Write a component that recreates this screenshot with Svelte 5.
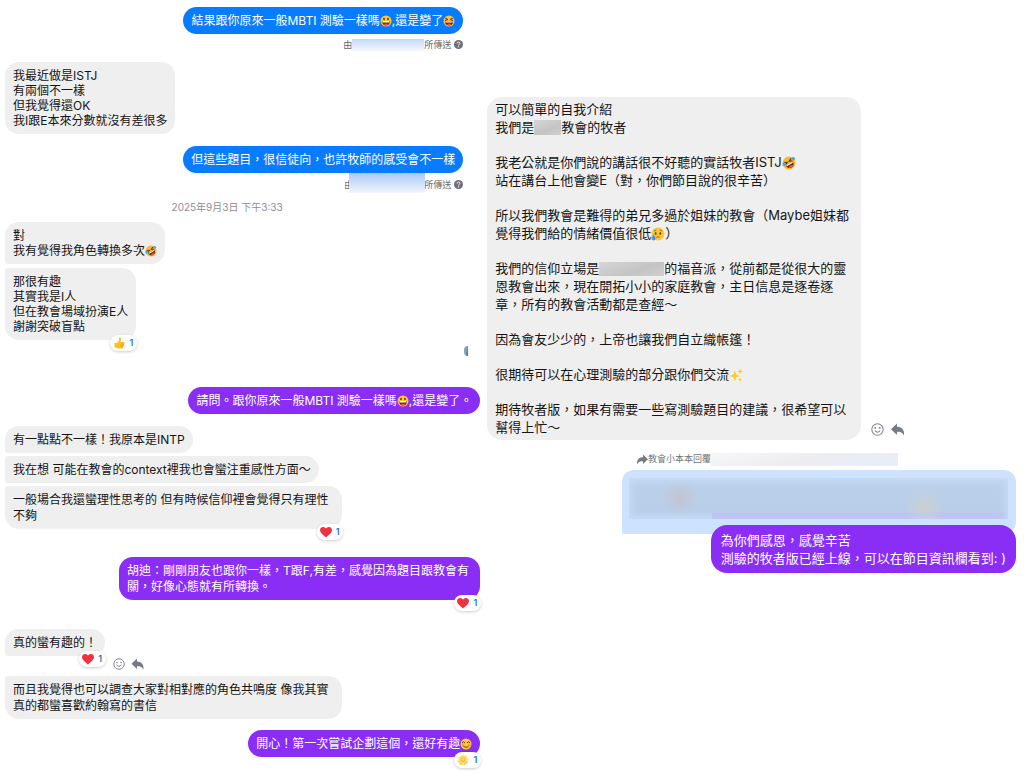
<script lang="ts">
	type Message = {
		text: string;
		gap: number;
		mine?: boolean;
		tone?: 'blue' | 'purple';
		loose?: boolean;
		joinTop?: boolean;
		joinBottom?: boolean;
		reaction?: 'thumb' | 'heart' | 'hug';
		actions?: boolean;
	};

	const firstQuestion: Message = {
		text: '結果跟你原來一般MBTI 測驗一樣嗎😀,還是變了😆',
		gap: 7,
		mine: true,
		tone: 'blue',
	};
	const firstAnswer: Message = {
		text: '我最近做是ISTJ\n有兩個不一樣\n但我覺得還OK\n我I跟E本來分數就沒有差很多',
		gap: 11,
	};
	const comment: Message = {
		text: '但這些題目，很信徒向，也許牧師的感受會不一樣',
		gap: 12,
		mine: true,
		tone: 'blue',
	};

	const replies: Message[] = [
		{ text: '對\n我有覺得我角色轉換多次🤣', gap: 8, joinBottom: true },
		{
			text: '那很有趣\n其實我是I人\n但在教會場域扮演E人\n謝謝突破盲點',
			gap: 4,
			joinTop: true,
			reaction: 'thumb',
		},
	];

	const secondChat: Message[] = [
		{ text: '請問。跟你原來一般MBTI 測驗一樣嗎😀,還是變了。', gap: 47, mine: true, tone: 'purple' },
		{ text: '有一點點不一樣！我原本是INTP', gap: 12, joinBottom: true },
		{ text: '我在想 可能在教會的context裡我也會蠻注重感性方面～', gap: 3, joinTop: true, joinBottom: true },
		{
			text: '一般場合我還蠻理性思考的 但有時候信仰裡會覺得只有理性不夠',
			gap: 3,
			joinTop: true,
			reaction: 'heart',
		},
		{
			text: '胡迪：剛剛朋友也跟你一樣，T跟F,有差，感覺因為題目跟教會有關，好像心態就有所轉換。',
			gap: 28,
			mine: true,
			tone: 'purple',
			reaction: 'heart',
		},
		{ text: '真的蠻有趣的！', gap: 29, joinBottom: true, reaction: 'heart', actions: true },
		{
			text: '而且我覺得也可以調查大家對相對應的角色共鳴度 像我其實真的都蠻喜歡約翰寫的書信',
			gap: 20,
			joinTop: true,
		},
		{ text: '開心！第一次嘗試企劃這個，還好有趣😊', gap: 11, mine: true, tone: 'purple', reaction: 'hug' },
	].map((m) => ({ ...m, loose: true }) as Message);

	const intro = [
		'可以簡單的自我介紹\n我們是[short]教會的牧者',
		'我老公就是你們說的講話很不好聽的實話牧者ISTJ🤣\n站在講台上他會變E（對，你們節目說的很辛苦）',
		'所以我們教會是難得的弟兄多過於姐妹的教會（Maybe姐妹都覺得我們給的情緒價值很低😥）',
		'我們的信仰立場是[long]的福音派，從前都是從很大的靈恩教會出來，現在開拓小小的家庭教會，主日信息是逐卷逐章，所有的教會活動都是查經～',
		'因為會友少少的，上帝也讓我們自立織帳篷！',
		'很期待可以在心理測驗的部分跟你們交流✨',
		'期待牧者版，如果有需要一些寫測驗題目的建議，很希望可以幫得上忙～',
	];

	function split(text: string) {
		return text.split(/(😀|😆|🤣|😥|😊|✨|\[short\]|\[long\])/u).filter(Boolean);
	}
</script>

{#snippet emoji(name: string)}
	<svg class="emoji" viewBox="0 0 24 24" role="img" aria-label={name}>
		{#if name === '✨'}
			<path d="M10 4 12.4 11 19 13.5 12.4 16 10 23 7.6 16 1 13.5 7.6 11ZM19 1l1.3 3.7L24 6l-3.7 1.3L19 11l-1.3-3.7L14 6l3.7-1.3ZM19 16l1 3 3 1-3 1-1 3-1-3-3-1 3-1Z" fill="#fccb2e" />
		{:else if name === '🤣'}
			<g transform="rotate(-30 12 12)">
				<circle cx="12" cy="12" r="11" fill="#fcb827" />
				<path d="m5 7 5 2.5L5 12M19 7l-5 2.5 5 2.5" fill="none" stroke="#633511" stroke-width="2" />
				<path d="M5 13h14c0 5-3 8-7 8s-7-3-7-8Z" fill="#702718" />
				<path d="M6 13h12v2H6Z" fill="#fff" />
				<path d="M8 19c2-3 6-3 8 0-2 2.5-6 2.5-8 0Z" fill="#f0524d" />
			</g>
			<path d="M1 12c4-2 7 0 6 3s-5 3-6 1ZM16 3c3-3 8 0 6 3s-6 1-6-3Z" fill="#4aa5ea" />
		{:else}
			<circle cx="12" cy="12" r="11" fill="#fdc633" />
			{#if name === '😀'}
				<ellipse cx="8" cy="8" rx="1.7" ry="2.5" fill="#5e351a" />
				<ellipse cx="16" cy="8" rx="1.7" ry="2.5" fill="#5e351a" />
				<path d="M4 12h16c0 5-3 9-8 9s-8-4-8-9Z" fill="#702718" />
				<path d="M5 12h14v3H5Z" fill="#fff" />
				<path d="M8 19c2-3 6-3 8 0-2 2-6 2-8 0Z" fill="#f0524d" />
			{:else if name === '😆'}
				<path d="m4 6 6 3-6 2M20 6l-6 3 6 2" fill="none" stroke="#633511" stroke-width="2" />
				<path d="M4 13h16c0 5-3 8-8 8s-8-3-8-8Z" fill="#702718" />
				<path d="M5 13h14v2H5Z" fill="#fff" />
				<path d="M8 19c2-3 6-3 8 0-2 2-6 2-8 0Z" fill="#f0524d" />
			{:else if name === '😊'}
				<path d="M4 10q3-5 6 0M14 10q3-5 6 0M6 15q6 7 12 0" fill="none" stroke="#6b3d15" stroke-width="2" />
				<circle cx="5" cy="14" r="3" fill="#f7924a" opacity=".6" />
				<circle cx="19" cy="14" r="3" fill="#f7924a" opacity=".6" />
			{:else}
				<path d="m5 7 4-2M19 7l-4-2M9 18q3-3 6 0" fill="none" stroke="#8a5a1e" stroke-width="1.5" />
				<ellipse cx="8" cy="11" rx="1.5" ry="2.2" fill="#5e351a" />
				<ellipse cx="16" cy="11" rx="1.5" ry="2.2" fill="#5e351a" />
				<path d="M4 13c3 4 5 6 3 9-2 2-6 1-6-3 0-2 2-4 3-6Z" fill="#3b9be8" />
			{/if}
		{/if}
	</svg>
{/snippet}

{#snippet rich(text: string)}
	{#each split(text) as part}{#if part === '[short]' || part === '[long]'}<span
				class="hidden-name"
				class:long={part === '[long]'}
			></span>{:else if /\p{Extended_Pictographic}/u.test(part)}{@render emoji(part)}{:else}{part}{/if}{/each}
{/snippet}

{#snippet reactionPill(kind: string)}
	<button class="reaction" aria-label="{kind} 1">
		<svg viewBox="0 0 24 24">
			{#if kind === 'heart'}
				<path d="M12 23C7 18 0 14 0 8c0-7 9-8 12-3 3-5 12-4 12 3 0 6-7 10-12 15Z" fill="#ef3340" />
			{:else if kind === 'thumb'}
				<path d="M3 12h5l4-5V2c1-2 5-1 4 3l-1 5h6c3 0 3 3 1 4 1 1 1 3-1 3 1 2 0 3-1 3 0 2-1 3-4 3h-6l-4-2H3Z" fill="#fcc21b" />
				<path d="M16 14h6M15 17h6M15 20h5" fill="none" stroke="#dc8f16" stroke-width="1" />
			{:else}
				<path d="m12 0 3 4 5-2v5l4 3-3 4 1 5-5 1-2 4-4-2-5 1-1-5-5-3 3-4-1-5 5-1Z" fill="#fde58c" />
				<circle cx="12" cy="11" r="7" fill="#fcd75c" />
				<path d="M8 9h2M14 9h2M8 13q4 4 8 0M3 15l7 6M21 15l-7 6" fill="none" stroke="#d9a640" stroke-width="1.5" />
			{/if}
		</svg>
		<span>1</span>
	</button>
{/snippet}

{#snippet actionButtons()}
	<div class="actions">
		<button aria-label="Add reaction">
			<svg viewBox="0 0 24 24" fill="none" stroke="#85898e" stroke-width="2">
				<circle cx="12" cy="12" r="10.5" />
				<path d="M7 14q5 6 10 0" />
				<circle cx="8" cy="9" r=".8" fill="#85898e" />
				<circle cx="16" cy="9" r=".8" fill="#85898e" />
			</svg>
		</button>
		<button aria-label="Reply">
			<svg class="reply" viewBox="0 0 24 24"><path d="M11 1v6c9 0 14 6 13 16-3-6-7-7-13-7v6L0 11.5Z" fill="#747b83" /></svg>
		</button>
	</div>
{/snippet}

{#snippet bubble(m: Message)}
	<div class="row" class:mine={m.mine} style:margin-top="{m.gap}px">
		<div
			class="bubble {m.tone ?? 'grey'}"
			class:loose={m.loose}
			class:join-top={m.joinTop}
			class:join-bottom={m.joinBottom}
		>
			<p>{@render rich(m.text)}</p>
			{#if m.reaction}{@render reactionPill(m.reaction)}{/if}
		</div>
		{#if m.actions}{@render actionButtons()}{/if}
	</div>
{/snippet}

{#snippet sentBy(tall: boolean)}
	<div class="sent-by" class:tall>
		<span>由</span><span class="sender"></span><span>所傳送</span>
		<svg viewBox="0 0 16 16">
			<circle cx="8" cy="8" r="8" fill="#6d737a" />
			<path d="M5.5 6.2c0-3.4 5-3.2 5-.2 0 2-2.5 1.8-2.5 3.8M8 11v2" fill="none" stroke="#fff" stroke-width="1.7" />
		</svg>
	</div>
{/snippet}

<main>
	<div class="column">
		<section class="narrow">
			{@render bubble(firstQuestion)}
			{@render sentBy(false)}
			{@render bubble(firstAnswer)}
			{@render bubble(comment)}
			{@render sentBy(true)}
			<time>2025年9月3日 下午3:33</time>
			{#each replies as m}
				{@render bubble(m)}
			{/each}
			<span class="seen"></span>
		</section>
		<section>
			{#each secondChat as m}
				{@render bubble(m)}
			{/each}
		</section>
	</div>

	<div class="column right">
		<div class="row">
			<div class="bubble grey intro">
				{#each intro as paragraph}
					<p>{@render rich(paragraph)}</p>
				{/each}
			</div>
			{@render actionButtons()}
		</div>
		<div class="reply-label">
			<svg viewBox="0 0 24 24"><path d="M13 1v6C4 7-1 13 0 23c3-6 7-7 13-7v6l11-10.5Z" fill="#747b83" /></svg>
			<span>教會小本本回覆</span>
			<span class="quoted-name"></span>
		</div>
		<div class="quote"><div class="quote-haze"></div></div>
		<div class="row mine answer">
			<div class="bubble purple">
				<p>為你們感恩，感覺辛苦
測驗的牧者版已經上線，可以在節目資訊欄看到: )</p>
			</div>
		</div>
	</div>
</main>

<style>
	:global(body) {
		margin: 0;
		background: #fff;
	}

	main {
		display: grid;
		grid-template-columns: 47fr 53fr;
		font-family: Inter, 'Noto Sans CJK TC', sans-serif;
		font-size: 12px;
		line-height: 16px;
		color: #151515;
	}

	p {
		margin: 0;
		white-space: pre-line;
	}

	button {
		padding: 0;
		border: 0;
		background: none;
		font: inherit;
		cursor: pointer;
	}

	.column {
		min-width: 0;
		padding: 0 1px 16px 5px;
		display: flow-root;
	}

	.narrow {
		position: relative;
		padding-right: 17px;
		line-height: 15px;
	}

	.row {
		display: flex;
		align-items: flex-end;
	}

	.mine {
		justify-content: flex-end;
	}

	.bubble {
		position: relative;
		max-width: 71%;
		box-sizing: border-box;
		padding: 6px 8px;
		border-radius: 14px;
	}

	.narrow .bubble {
		max-width: 90%;
	}

	.loose {
		padding-bottom: 5px;
	}

	.mine .loose {
		max-width: 76%;
	}

	.grey {
		background: #efefef;
	}

	.blue {
		background: #087cff;
		color: #fff;
	}

	.purple {
		background: #8a2df5;
		color: #fff;
	}

	.join-top {
		border-top-left-radius: 3px;
	}

	.join-bottom {
		border-bottom-left-radius: 3px;
	}

	.emoji {
		width: 12px;
		height: 12px;
		vertical-align: -2px;
	}

	.reaction {
		position: absolute;
		right: -1px;
		bottom: -11px;
		display: flex;
		align-items: center;
		gap: 4px;
		height: 16px;
		padding: 0 4px 0 3px;
		border-radius: 8px;
		background: #fff;
		box-shadow: 0 1px 3px rgba(0, 0, 0, 0.2);
		font-size: 9px;
		font-weight: 600;
		line-height: 16px;
		color: #2372dc;
	}

	.reaction svg {
		width: 12px;
		height: 12px;
	}

	.actions {
		display: flex;
		gap: 6px;
		margin-left: 8px;
		margin-bottom: -14px;
	}

	.actions button {
		display: flex;
	}

	.actions svg {
		width: 12px;
		height: 12px;
	}

	.actions .reply {
		width: 13px;
	}

	.sent-by {
		display: flex;
		align-items: center;
		justify-content: flex-end;
		height: 13px;
		margin-top: 4px;
		font-size: 9px;
		line-height: 13px;
		color: #65686c;
	}

	.sent-by svg {
		width: 9px;
		height: 9px;
		margin-left: 3px;
	}

	.sender {
		width: 72px;
		height: 12px;
		background: linear-gradient(#c3d9f8, #f6f7fb);
	}

	.tall {
		margin-top: 5px;
	}

	.tall .sender {
		z-index: 1;
		width: 76px;
		height: 20px;
		margin: -4px -1px 0 -4px;
		background: linear-gradient(#a9c9f7, #f3f6fb);
	}

	time {
		display: block;
		margin-top: 10px;
		padding-right: 14px;
		font-size: 10px;
		line-height: 13px;
		text-align: center;
		color: #8d8f93;
	}

	.seen {
		position: absolute;
		right: 12px;
		bottom: -16px;
		width: 4px;
		height: 10px;
		border-radius: 5px 0 0 5px;
		background: linear-gradient(100deg, #7fa6cb 50%, #62564f);
	}

	.right {
		padding: 97px 8px 16px 6px;
		font-size: 13px;
		line-height: 18px;
	}

	.intro {
		flex: 0 0 374px;
		max-width: 80%;
		padding: 3px 8px 4px;
		border-radius: 15px;
	}

	.intro p + p {
		margin-top: 17px;
	}

	.right .emoji {
		width: 14px;
		height: 14px;
		vertical-align: -3px;
	}

	.right .actions {
		gap: 7px;
		margin-left: 10px;
		margin-bottom: 4px;
	}

	.right .actions svg {
		width: 13px;
		height: 13px;
	}

	.hidden-name {
		display: inline-block;
		width: 27px;
		height: 15px;
		vertical-align: -3px;
		background: linear-gradient(160deg, #d6d6d6, #c4c4c4 60%, #cfcfcf);
	}

	.hidden-name.long {
		width: 65px;
		height: 14px;
	}

	.reply-label {
		display: flex;
		align-items: center;
		justify-content: flex-end;
		height: 14px;
		margin: 12px 118px 0 0;
		font-size: 9px;
		line-height: 14px;
		color: #74777b;
	}

	.reply-label svg {
		width: 11px;
		height: 11px;
	}

	.quoted-name {
		width: 187px;
		height: 13px;
		background: linear-gradient(165deg, #f7f7f8, #ededf0 50%, #e6eef9);
	}

	.quote {
		box-sizing: border-box;
		height: 64px;
		margin: 4px 0 0 135px;
		padding: 8px 8px 15px 7px;
		border-radius: 12px 12px 12px 2px;
		background: #cce2ff;
	}

	.quote-haze {
		height: 100%;
		background:
			radial-gradient(circle at 51px 20px, rgba(206, 181, 189, 0.5), transparent 18px),
			radial-gradient(circle at 78% 75%, rgba(219, 207, 190, 0.6), transparent 20px),
			linear-gradient(to top, rgba(181, 151, 244, 0.8), transparent 8px) right / 78% 100% no-repeat,
			linear-gradient(#bcd1e9, #b8cee8);
		box-shadow: inset 0 0 8px 2px #c7ddf9;
	}

	.answer {
		position: relative;
		margin-top: -9px;
	}

	.answer .bubble {
		padding: 6px 10px;
		border-radius: 16px;
	}
</style>
